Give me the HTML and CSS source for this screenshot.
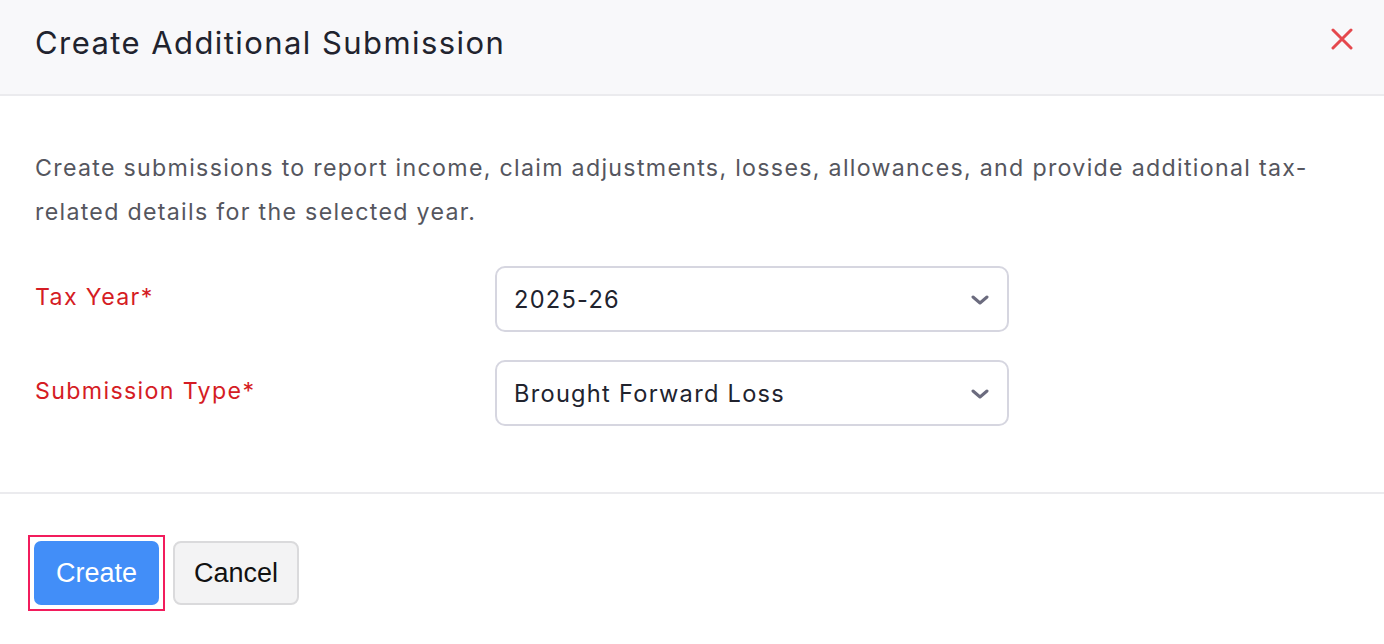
FILE: index.html
```html
<!DOCTYPE html>
<html lang="en">
<head>
<meta charset="utf-8">
<title>Create Additional Submission</title>
<link rel="stylesheet" href="styles.css">
</head>
<body>
<div class="modal">
  <header class="modal-header">
    <h1 class="modal-title">Create Additional Submission</h1>
    <button class="close-btn" aria-label="Close">
      <svg width="22" height="22" viewBox="0 0 22 22"><path d="M2 2L20 20M20 2L2 20" stroke="#e5484d" stroke-width="3" stroke-linecap="round"/></svg>
    </button>
  </header>
  <section class="modal-body">
    <p class="desc">Create submissions to report income, claim adjustments, losses, allowances, and provide additional tax-related details for the selected year.</p>
    <div class="form-row">
      <label class="field-label">Tax Year*</label>
      <div class="select">
        <span class="select-value">2025-26</span>
        <svg class="chevron" width="18" height="10" viewBox="0 0 18 10"><path d="M2 2L9 8L16 2" fill="none" stroke="#6b6b7e" stroke-width="3" stroke-linecap="round" stroke-linejoin="round"/></svg>
      </div>
    </div>
    <div class="form-row">
      <label class="field-label">Submission Type*</label>
      <div class="select">
        <span class="select-value">Brought Forward Loss</span>
        <svg class="chevron" width="18" height="10" viewBox="0 0 18 10"><path d="M2 2L9 8L16 2" fill="none" stroke="#6b6b7e" stroke-width="3" stroke-linecap="round" stroke-linejoin="round"/></svg>
      </div>
    </div>
  </section>
  <footer class="modal-footer">
    <span class="focus-ring"><button class="btn btn-primary">Create</button></span>
    <button class="btn btn-secondary">Cancel</button>
  </footer>
</div>
</body>
</html>
```

FILE: styles.css
```css
* { box-sizing: border-box; }
html, body { margin: 0; padding: 0; background: #ffffff; }
body {
  font-family: "Inter", "Noto Sans", sans-serif;
  color: #21232e;
}

.modal { width: 1384px; }

.modal-header {
  height: 96px;
  background: #f8f8fa;
  border-bottom: 2px solid #ebebee;
  display: flex;
  align-items: center;
  justify-content: space-between;
  padding: 0 30px 10px 35px;
}
.modal-title {
  margin: 0;
  font-size: 31px;
  font-weight: 400;
  letter-spacing: 0.046em;
  color: #21232e;
}
.close-btn {
  background: none;
  border: 0;
  padding: 0;
  width: 24px;
  height: 24px;
  display: flex;
  align-items: center;
  justify-content: center;
  margin-bottom: 6px;
}

.modal-body {
  padding: 50px 35px 0 35px;
  height: 398px;
  border-bottom: 2px solid #ebebee;
}
.desc {
  margin: 0 0 32px 0;
  font-size: 23.2px;
  letter-spacing: 0.056em;
  line-height: 44px;
  color: #55565e;
  width: 1300px;
}
.form-row {
  display: grid;
  grid-template-columns: 460px 514px;
  align-items: center;
  margin-bottom: 28px;
}
.field-label {
  font-size: 23.2px;
  letter-spacing: 0.058em;
  color: #d51c24;
  padding-bottom: 4px;
}
.select {
  height: 66px;
  border: 2px solid #d6d6e0;
  border-radius: 10px;
  display: flex;
  align-items: center;
  justify-content: space-between;
  padding: 0 18px 0 17px;
  background: #fff;
}
.select-value {
  font-size: 23.6px;
  letter-spacing: 0.054em;
  color: #21232e;
}
.chevron { margin-top: 2px; }

.modal-footer {
  display: flex;
  align-items: center;
  gap: 8px;
  padding: 41px 35px 0 28px;
}
.focus-ring {
  display: flex;
  border: 2px solid #f21c5c;
  padding: 4px;
}
.btn {
  height: 64px;
  font-family: "Liberation Sans", Arial, sans-serif;
  font-size: 27px;
  padding: 0;
  cursor: pointer;
}
.btn-primary {
  width: 125px;
  background: #428ef8;
  color: #ffffff;
  border: 0;
  border-radius: 7px;
}
.btn-secondary {
  width: 126px;
  background: #f3f3f4;
  color: #111;
  border: 2px solid #dadadc;
  border-radius: 8px;
}
```
